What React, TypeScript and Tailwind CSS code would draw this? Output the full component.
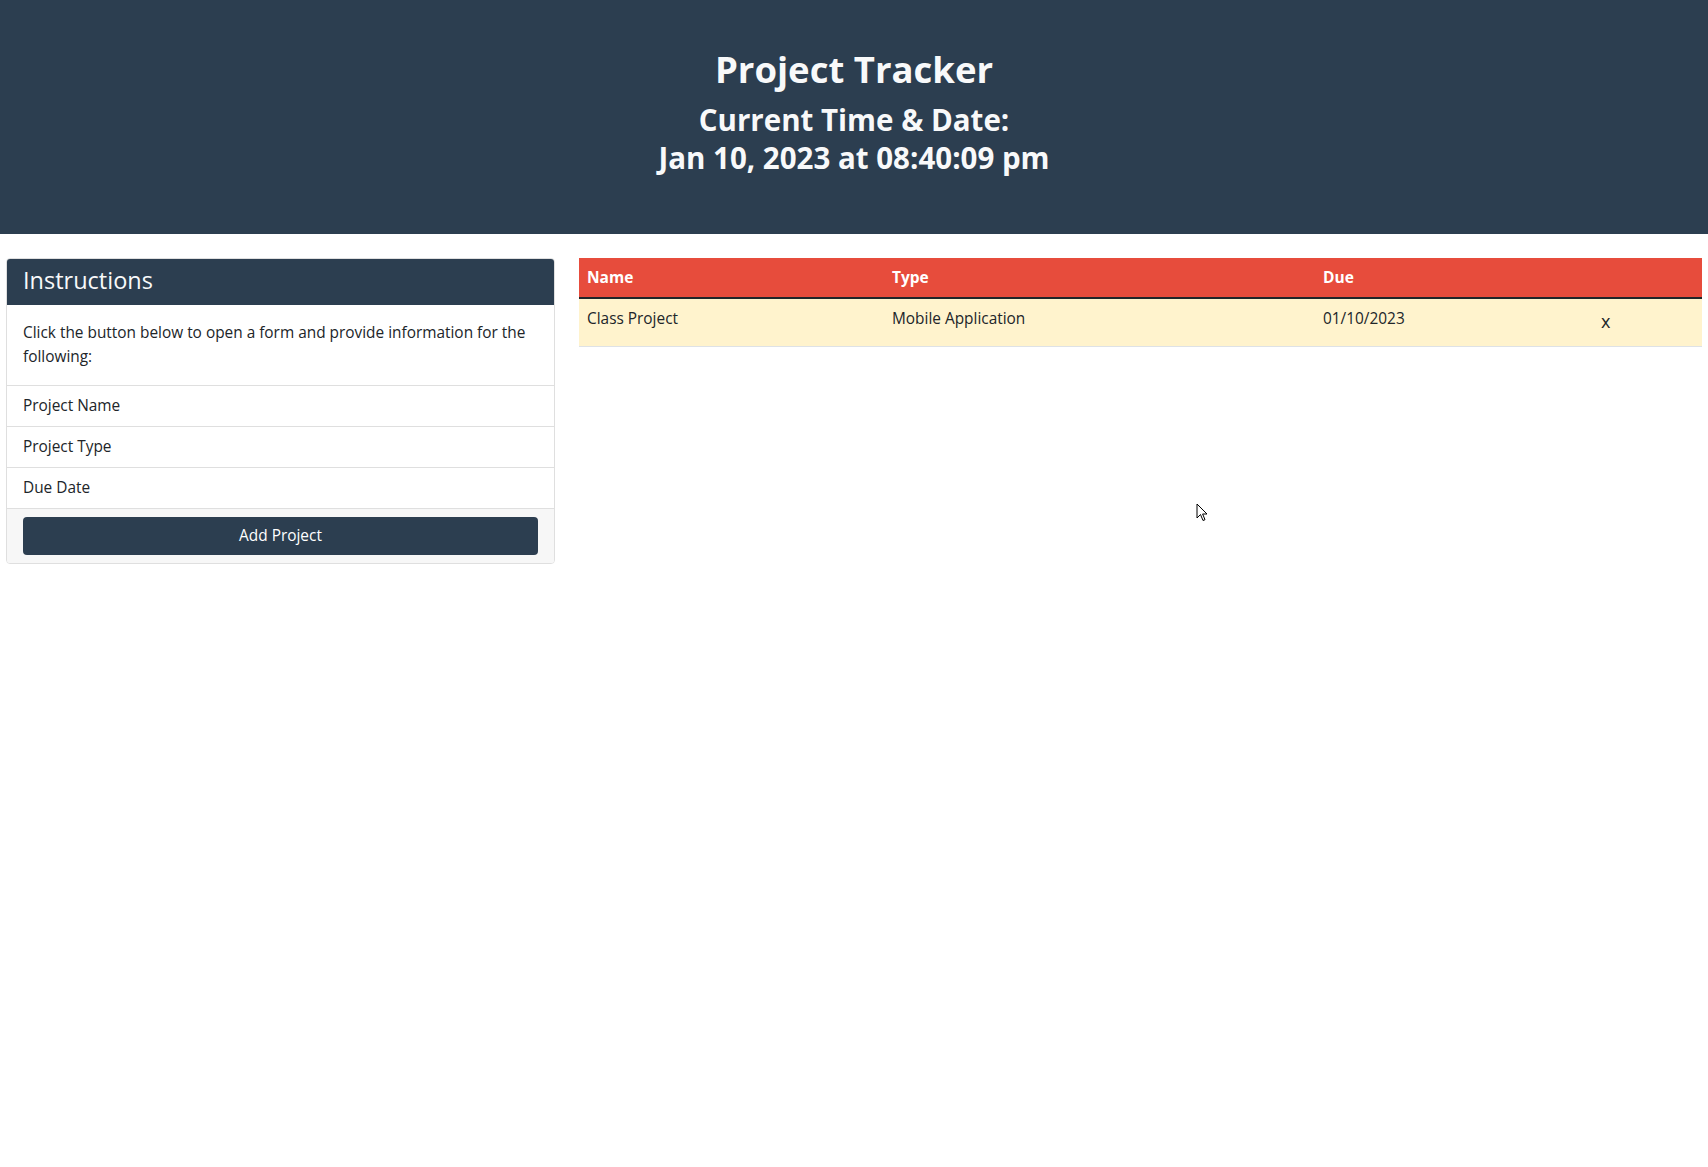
import React from "react";

const fields = ["Project Name", "Project Type", "Due Date"];

const projects = [{ name: "Class Project", type: "Mobile Application", due: "01/10/2023" }];

function Instructions() {
  return (
    <div className="w-[549px] border border-[#dfdfdf] rounded-[4px] overflow-hidden">
      <div className="h-[46px] bg-[#2c3e50] text-[#f8f9fa] text-[23.5px] flex items-center px-4 pb-[2px]">
        Instructions
      </div>
      <p className="p-4 leading-6 text-[#212529]">
        Click the button below to open a form and provide information for the following:
      </p>
      <ul>
        {fields.map((f) => (
          <li key={f} className="border-t border-[#dfdfdf] px-4 py-2 leading-6 text-[#212529]">
            {f}
          </li>
        ))}
      </ul>
      <div className="border-t border-[#dfdfdf] bg-[#f7f7f7] px-4 py-2">
        <button className="w-full h-[38px] rounded-[4px] bg-[#2c3e50] text-white">Add Project</button>
      </div>
    </div>
  );
}

function ProjectTable() {
  return (
    <table className="flex-1 border-collapse text-left">
      <thead>
        <tr className="bg-[#e74c3c] text-white h-[40px]">
          <th className="w-[305px] px-2 font-bold text-[15.5px] border-b-2 border-[#212529]">Name</th>
          <th className="w-[431px] px-2 font-bold text-[15.5px] border-b-2 border-[#212529]">Type</th>
          <th className="px-2 font-bold text-[15.5px] border-b-2 border-[#212529]">Due</th>
          <th className="w-[120px] border-b-2 border-[#212529]"></th>
        </tr>
      </thead>
      <tbody>
        {projects.map((p) => (
          <tr key={p.name} className="bg-[#fff3cd] text-[#212529] border-b border-[#dee2e6]">
            <td className="px-2 pt-[8px] pb-[16px] align-top">{p.name}</td>
            <td className="px-2 pt-[8px] pb-[16px] align-top">{p.type}</td>
            <td className="px-2 pt-[8px] pb-[16px] align-top">{p.due}</td>
            <td className="pt-[9px] align-top">
              <button className="text-[18px] text-[#212529] pl-[19px]">x</button>
            </td>
          </tr>
        ))}
      </tbody>
    </table>
  );
}

export default function App() {
  return (
    <div className="relative min-h-screen bg-white text-[15.4px]" style={{ fontFamily: '"Open Sans", sans-serif' }}>
      <header className="h-[234px] bg-[#2c3e50] text-[#f8f9fa] text-center font-bold pt-[44px]">
        <h1 className="text-[36.5px] leading-[50px]">Project Tracker</h1>
        <h2 className="mt-[7px] text-[29.5px] leading-[38px]">Current Time &amp; Date:</h2>
        <h2 className="text-[29.5px] leading-[38px]">Jan 10, 2023 at 08:40:09 pm</h2>
      </header>
      <main className="flex items-start gap-[24px] pl-[6px] pr-[6px] pt-[24px]">
        <Instructions />
        <ProjectTable />
      </main>
      <svg className="absolute left-[1196px] top-[503px]" width="12" height="19" viewBox="0 0 12 19">
        <path d="M1 1 L1 15 L4.5 11.5 L7 17.5 L9 16.7 L6.6 11 L11 11 Z" fill="white" stroke="black" strokeWidth="1" />
      </svg>
    </div>
  );
}
